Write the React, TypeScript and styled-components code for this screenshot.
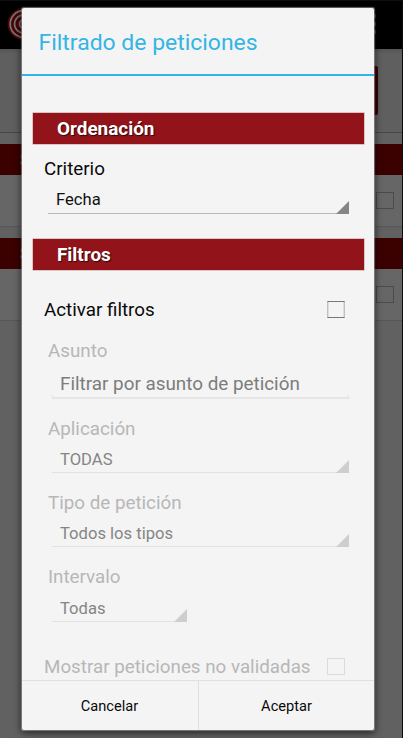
import React from "react";
import styled, { createGlobalStyle } from "styled-components";

const GlobalStyle = createGlobalStyle`
  * { box-sizing: border-box; }
  html, body { margin: 0; padding: 0; overflow: hidden; }
  body { font-family: Roboto, "Liberation Sans", sans-serif; background: #606060; }
`;

const Screen = styled.div`
  position: relative;
  width: 403px;
  height: 738px;
  overflow: hidden;
  background: #616161;
`;

const Backdrop = styled.div`
  display: flex;
  flex-direction: column;
  height: 100%;
  border-right: 1px solid #0c0c0c;
`;

const ActionBar = styled.div`
  display: flex;
  align-items: flex-start;
  justify-content: space-between;
  height: 49px;
  padding: 6px 26px 0 7px;
  background: #000;
  border-top: 1px solid #0f0f0f;
`;

const MenuDots = styled.div`
  display: grid;
  gap: 4px;
  padding-top: 7px;
  i { width: 4px; height: 4px; background: #333; }
`;

const TopPanel = styled.div`
  display: flex;
  justify-content: flex-end;
  height: 84px;
  padding: 17px 24px 0 0;
  background: linear-gradient(#555, #5f5f5f 5px);
  border-bottom: 1px solid #464646;
`;

const RedButton = styled.div`
  width: 120px;
  height: 49px;
  border-radius: 2px;
  background: #3b0000;
`;

const GroupBar = styled.div`
  height: 31px;
  margin-top: 11px;
  padding-left: 20px;
  background: #3b0000;
  color: #777;
  font: bold 18px/31px Roboto, sans-serif;
`;

const ListRow = styled.div`
  display: flex;
  align-items: center;
  justify-content: flex-end;
  height: 52px;
  padding-right: 8px;
  background: #666;
  border-bottom: 1px solid #565656;
`;

const DimBox = styled.div`
  width: 18px;
  height: 17px;
  border: 1px solid #4b4b4b;
`;

const Dialog = styled.section`
  position: absolute;
  left: 22px;
  top: 8px;
  width: 352px;
  height: 722px;
  display: flex;
  flex-direction: column;
  background: #f4f4f4;
  border-radius: 2px;
  box-shadow: 0 0 1px 0.5px rgba(170, 170, 170, 0.6), 0 2px 7px 1px rgba(0, 0, 0, 0.65);
`;

const Title = styled.h1`
  flex: none;
  margin: 0;
  height: 68px;
  padding-left: 16.5px;
  border-bottom: 2px solid #33b5e5;
  color: #33b5e5;
  font-size: 22.95px;
  font-weight: 400;
  line-height: 70px;
  white-space: nowrap;
`;

const Body = styled.div`
  flex: 1;
  min-height: 0;
  overflow: hidden;
  padding: 37px 10.5px 0 11px;
`;

const SectionBar = styled.h2<{ $top?: number }>`
  margin: ${(p) => p.$top ?? 0}px 0 0;
  height: 31px;
  width: 330.5px;
  padding-left: 24px;
  background: #93131a;
  box-shadow: 0 0 0 0.6px #c9a6a8;
  color: #fff;
  font-size: 18.9px;
  font-weight: 700;
  line-height: 32px;
  text-shadow: 1px 1px 1px rgba(0, 0, 0, 0.7);
`;

const Label = styled.div<{ $h: number; $indent: number; $off?: boolean }>`
  height: ${(p) => p.$h}px;
  padding-left: ${(p) => p.$indent}px;
  padding-top: 1px;
  line-height: ${(p) => p.$h}px;
  font-size: 18.8px;
  color: ${(p) => (p.$off ? "#b7b7b7" : "#0a0a0a")};
  white-space: nowrap;
`;

const SpinnerBox = styled.div<{ $h: number; $left: number; $width: number; $off?: boolean }>`
  display: flex;
  align-items: flex-end;
  justify-content: space-between;
  height: ${(p) => p.$h}px;
  width: ${(p) => p.$width}px;
  margin-left: ${(p) => p.$left}px;
  padding-left: 8px;
  border-bottom: 1px solid ${(p) => (p.$off ? "#e2e2e2" : "#b9b9b9")};
  color: ${(p) => (p.$off ? "#858585" : "#111")};
  font-size: 16.6px;
  svg { display: block; margin-bottom: -1px; fill: ${(p) => (p.$off ? "#cecece" : "#858585")}; }
  span {
    line-height: 20px;
    padding-bottom: ${(p) => (p.$off ? 2 : 3)}px;
    white-space: nowrap;
  }
`;

const TextField = styled.div`
  height: 23px;
  width: 297px;
  margin-left: 19px;
  padding-left: 8px;
  color: #7c7c7c;
  font-size: 18.85px;
  line-height: 17px;
  white-space: nowrap;
  background:
    linear-gradient(#e3e3e3, #e3e3e3) left bottom / 1px 4px no-repeat,
    linear-gradient(#e3e3e3, #e3e3e3) right bottom / 1px 4px no-repeat,
    linear-gradient(#e6e6e6, #e6e6e6) left bottom / 100% 2px no-repeat;
`;

const CheckRow = styled.div<{ $top: number }>`
  display: flex;
  align-items: center;
  justify-content: space-between;
  height: 30px;
  margin-top: ${(p) => p.$top}px;
  padding-right: 18.5px;
`;

const CheckBox = styled.div<{ $off?: boolean }>`
  width: 18px;
  height: 17px;
  border: 1px solid ${(p) => (p.$off ? "#dcdcdc" : "#777")};
  border-left-color: ${(p) => (p.$off ? "#dcdcdc" : "#c0c0c0")};
  border-right-color: ${(p) => (p.$off ? "#dcdcdc" : "#c0c0c0")};
  box-shadow: ${(p) => (p.$off ? "none" : "inset 1px 0 #dedede, inset -1px 0 #dedede")};
`;

const Footer = styled.div`
  flex: none;
  display: grid;
  grid-template-columns: 177px 1fr;
  height: 50px;
  border-top: 1px solid #e0e0e0;
`;

const FooterButton = styled.button`
  border: 0;
  border-right: 1px solid #e0e0e0;
  padding: 0 1px 0 0;
  background: none;
  color: #0a0a0a;
  font: 400 14.6px Roboto, sans-serif;
  &:last-child { border-right: 0; padding-right: 0; }
`;

type SpinnerProps = { value: string; h: number; left: number; width: number; off?: boolean };

function Spinner({ value, h, left, width, off }: SpinnerProps) {
  return (
    <SpinnerBox $h={h} $left={left} $width={width} $off={off}>
      <span>{value}</span>
      <svg width="13" height="13" viewBox="0 0 13 13"><path d="M13 0V13H0Z" /></svg>
    </SpinnerBox>
  );
}

function TargetLogo() {
  return (
    <svg width="34" height="34" viewBox="0 0 34 34">
      <circle cx="16.5" cy="17" r="16" fill="#480407" />
      <g fill="none" stroke="#787272" strokeWidth="1.8">
        <circle cx="16.5" cy="17" r="13.3" />
        <circle cx="16.5" cy="17" r="9" />
        <circle cx="16.5" cy="17" r="4" />
      </g>
    </svg>
  );
}

export default function App() {
  return (
    <>
      <GlobalStyle />
      <Screen>
        <Backdrop>
          <ActionBar>
            <TargetLogo />
            <MenuDots><i /><i /><i /></MenuDots>
          </ActionBar>
          <TopPanel><RedButton /></TopPanel>
          <GroupBar>S</GroupBar>
          <ListRow><DimBox /></ListRow>
          <GroupBar>S</GroupBar>
          <ListRow><DimBox /></ListRow>
        </Backdrop>
        <Dialog>
          <Title>Filtrado de peticiones</Title>
          <Body>
            <SectionBar>Ordenación</SectionBar>
            <Label $h={49} $indent={11}>Criterio</Label>
            <Spinner value="Fecha" h={21} left={15} width={301} />
            <SectionBar $top={25}>Filtros</SectionBar>
            <CheckRow $top={24}>
              <Label $h={30} $indent={11}>Activar filtros</Label>
              <CheckBox />
            </CheckRow>
            <Label $h={52} $indent={15} $off>Asunto</Label>
            <TextField>Filtrar por asunto de petición</TextField>
            <Label $h={59} $indent={15} $off>Aplicación</Label>
            <Spinner value="TODAS" h={15} left={19} width={297} off />
            <Label $h={59} $indent={15} $off>Tipo de petición</Label>
            <Spinner value="Todos los tipos" h={15} left={19} width={297} off />
            <Label $h={59} $indent={15} $off>Intervalo</Label>
            <Spinner value="Todas" h={16} left={19} width={135} off />
            <CheckRow $top={29}>
              <Label $h={30} $indent={11} $off>Mostrar peticiones no validadas</Label>
              <CheckBox $off />
            </CheckRow>
          </Body>
          <Footer>
            <FooterButton>Cancelar</FooterButton>
            <FooterButton>Aceptar</FooterButton>
          </Footer>
        </Dialog>
      </Screen>
    </>
  );
}
